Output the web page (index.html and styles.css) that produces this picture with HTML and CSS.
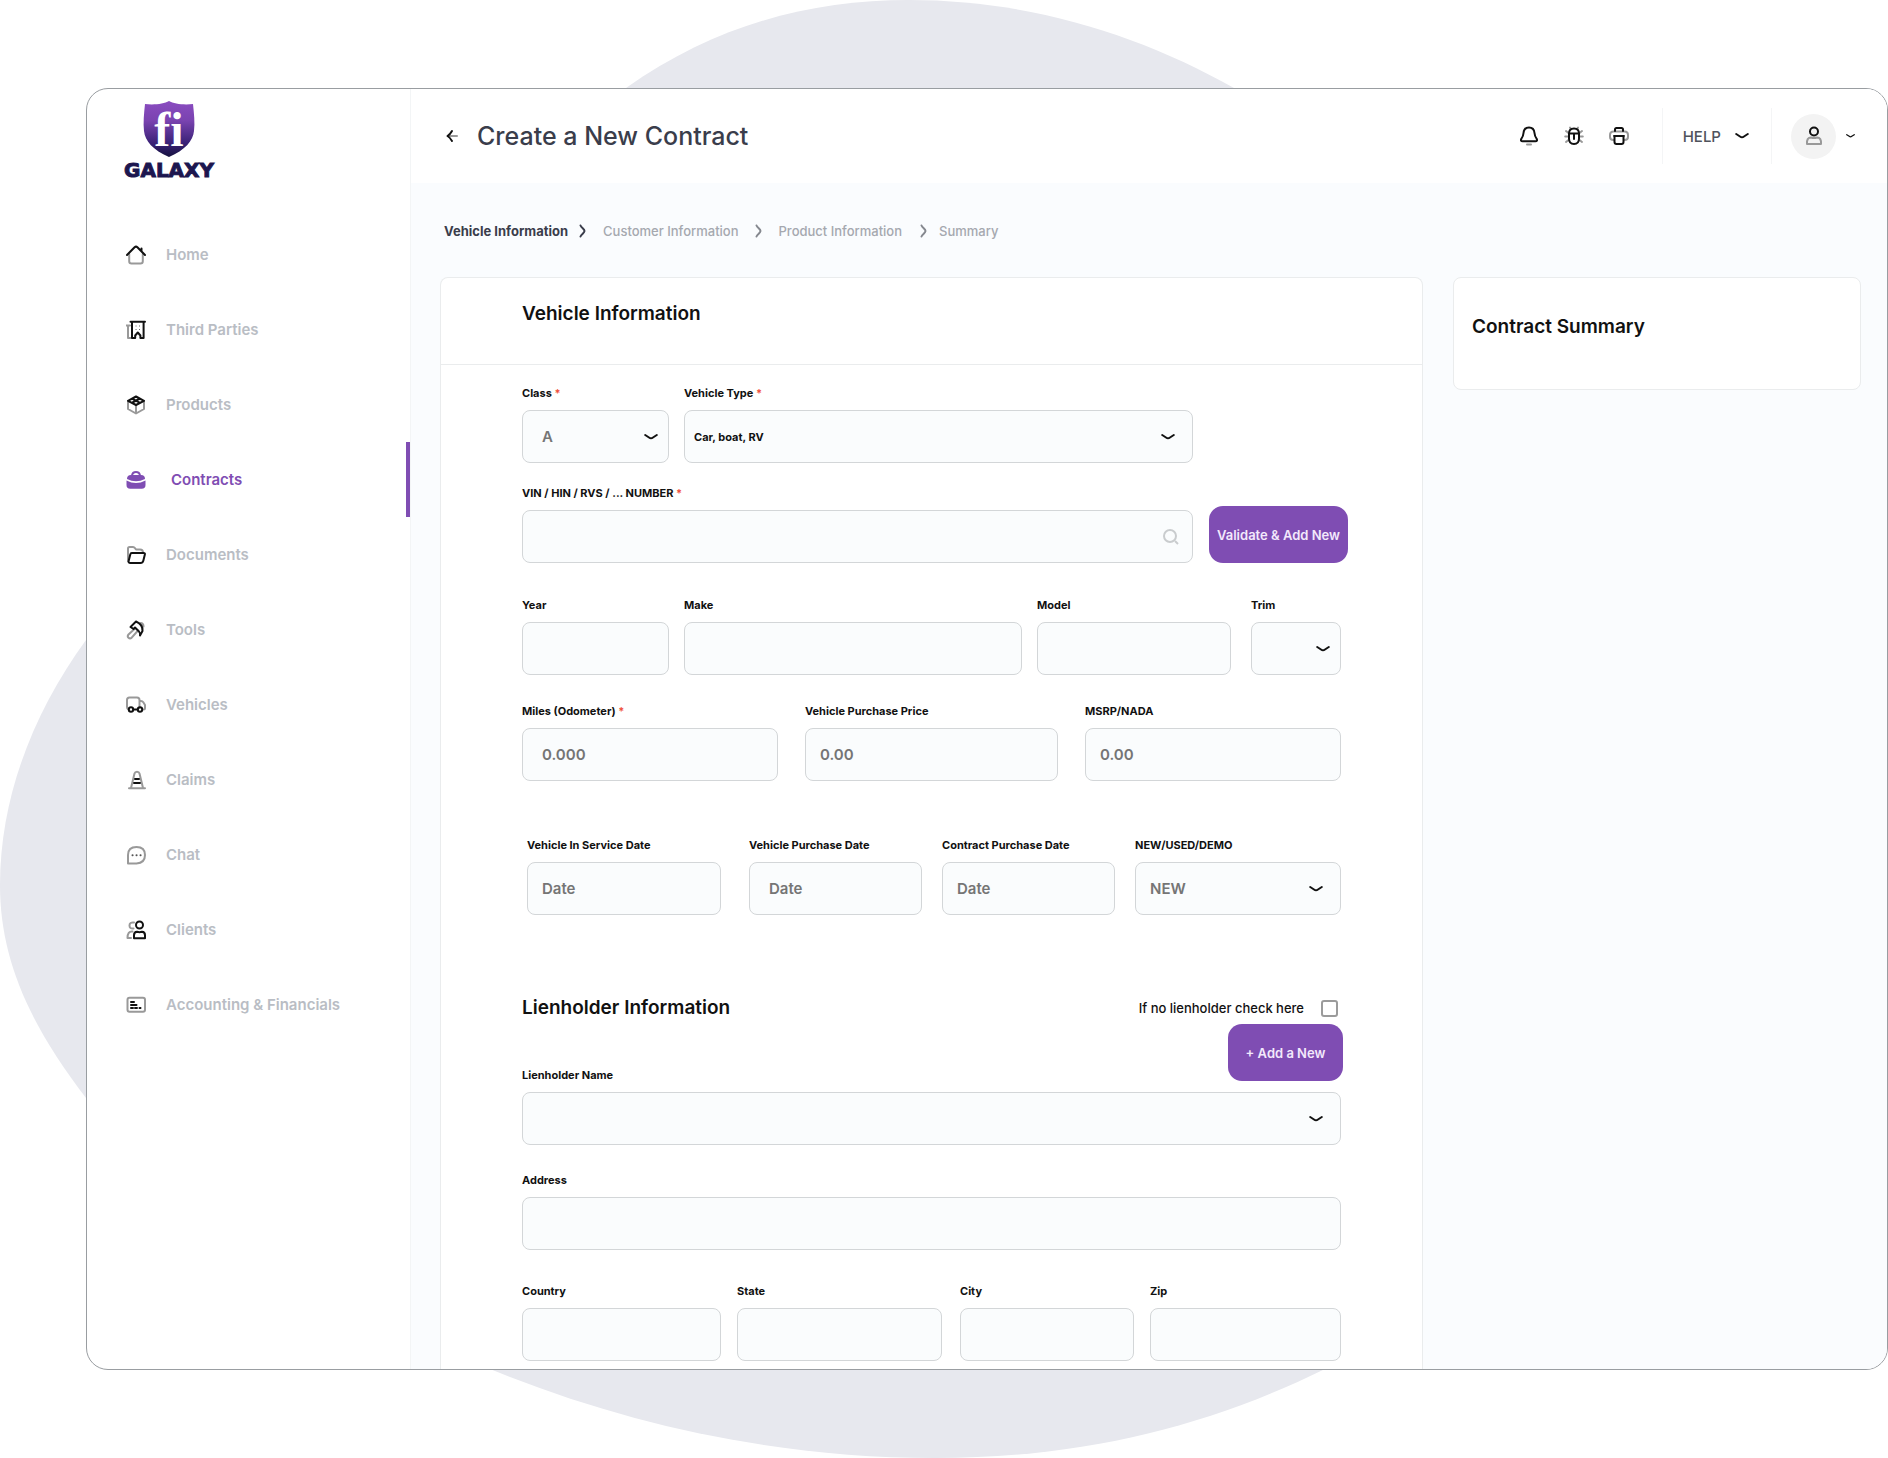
FILE: index.html
```html
<!DOCTYPE html>
<html lang="en">
<head>
<meta charset="utf-8">
<title>Create a New Contract</title>
<link rel="stylesheet" href="styles.css">
</head>
<body>
<svg width="0" height="0" class="defs" aria-hidden="true">
  <symbol id="chevron" viewBox="0 0 14 8"><path d="M1.200 2L5 4.500Q7 6 9 4.500L12.800 2" fill="none" stroke="currentColor" stroke-width="2" stroke-linecap="round"/></symbol>
  <symbol id="step" viewBox="0 0 8 14"><path d="M1.500 1.500C2.500 4 5.500 5 5.500 7S2.500 10 1.500 12.500" fill="none" stroke="currentColor" stroke-width="2" stroke-linecap="round"/></symbol>
</svg>
<div class="stage">
  <svg class="blob" viewBox="0 0 1888 1458" preserveAspectRatio="none" aria-hidden="true">
    <path d="M0 885C0 795 35 710 86 640L626 88C715 25 810 0 909 0C1030 0 1140 35 1234 88L1325 1369C1205 1428 1080 1458 935 1458C780 1458 630 1426 490 1369L86 1098C30 1025 0 960 0 885Z"/>
  </svg>
  <div class="window">
    <aside class="sidebar">
      <a class="logo" href="#">
        <svg width="52" height="56" viewBox="0 0 52 56" role="img" aria-label="fi">
          <defs><linearGradient id="shield" x1="0" y1="0" x2="0" y2="1"><stop offset="0" stop-color="#8a4cc0"/><stop offset=".35" stop-color="#7a43b0"/><stop offset=".75" stop-color="#3a2277"/><stop offset="1" stop-color="#15113f"/></linearGradient></defs>
          <path d="M26 0C21 3 11 4 2 3C1 12 0 22 1 30C2 40 10 49 26 56C42 49 50 40 51 30C52 22 51 12 50 3C41 4 31 3 26 0Z" fill="url(#shield)"/>
          <text x="26" y="45" text-anchor="middle" class="logo-mark">fi</text>
        </svg>
        <span class="logo-name">GALAXY</span>
      </a>
      <nav class="nav">
        <a class="nav-item" href="#"><svg class="icon" viewBox="0 0 20 20"><path class="soft" d="M3.200 9v7.200q0 2.300 2.300 2.300h9q2.300 0 2.300-2.300V9"/><path d="M1 10L8.600 2.200q1.400-1.200 2.800 0L19 10M15.500 6V3.500"/></svg><span>Home</span></a>
        <a class="nav-item" href="#"><svg class="icon" viewBox="0 0 20 20"><path class="soft" d="M.5 5.500H4M2 5.500V18h3"/><path d="M4.500 1.800h14.500M6 2v16h3.200v-2.500l2.600-3 2.600 3V18h3.200V2"/><path class="dots" d="M10 6h.1M13.500 6h.1M10 9.500h.1M13.500 9.500h.1"/></svg><span>Third Parties</span></a>
        <a class="nav-item" href="#"><svg class="icon" viewBox="0 0 20 20"><path class="soft" d="M2 6v8l8 4.500 8-4.500V6M10 10v8"/><path d="M10 1.500L18 5.800 10 10 2 5.800zM6 3.700l8 4.200M6.500 7.500L14 3.500"/></svg><span>Products</span></a>
        <a class="nav-item active" href="#"><svg class="icon" viewBox="0 0 20 20"><path d="M6 5.500q.5-3.500 4-3.500t4 3.500"/><path class="solid" d="M1 9q0-4 4-4h10q4 0 4 4-9 4.500-18 0zM.5 10.500q9.500 5 19 0V15q0 3.800-3.800 3.800H4.300Q.5 18.800.5 15z"/></svg><span>Contracts</span></a>
        <a class="nav-item" href="#"><svg class="icon" viewBox="0 0 20 20"><path class="soft" d="M2 16V3.500Q2 2 3.500 2H7q1.200 0 2 1.200L10 4.500h4q3 0 3 3"/><path d="M5.800 8H17.500q1.800 0 1.300 1.700l-1.500 6q-.6 2.300-2.800 2.300h-10Q2 18 2.700 15.700l1.500-6Q4.600 8 5.800 8z"/></svg><span>Documents</span></a>
        <a class="nav-item" href="#"><svg class="icon" viewBox="0 0 20 20"><path class="soft" d="M9 8.500l-6.500 6q-1.500 1.800 0 3.200t3.200 0L12 10.500M14.500 3q3 0 3 3.500"/><path d="M4.500 7L10 1.500q7 3 6.500 9.500l-2.500 4.500q.5-2-1-4L9 7.500 7.500 9z"/></svg><span>Tools</span></a>
        <a class="nav-item" href="#"><svg class="icon" viewBox="0 0 20 20"><path class="soft" d="M2.500 14.500Q1 14 1 12V5q0-2.500 2.500-2.500H11q2.500 0 2.500 2.500v8M13.500 6H15q1.500 0 2.300 1.200L19 10v3q0 1.500-1.500 1.500"/><circle cx="5" cy="14.500" r="2.200"/><circle cx="14" cy="14.500" r="2.200"/><path d="M7.500 14.500h4"/></svg><span>Vehicles</span></a>
        <a class="nav-item" href="#"><svg class="icon" viewBox="0 0 20 20"><path class="soft" d="M3 18.200h16M5 18L8.500 3.500q.5-1.800 2.500-1.800t2.500 1.800L17 18"/><path d="M9 9h4M8 13h6"/></svg><span>Claims</span></a>
        <a class="nav-item" href="#"><svg class="icon" viewBox="0 0 20 20"><path class="soft" d="M2 18.500V10q0-8 8.500-8t8.500 8-8.500 8.500z"/><path class="dots dots-lg" d="M6.500 10.200h.1M10.500 10.200h.1M14.500 10.200h.1"/></svg><span>Chat</span></a>
        <a class="nav-item" href="#"><svg class="icon" viewBox="0 0 20 20"><path class="soft" d="M8 2.500q-4.500-.5-4.500 3t4 3M6.500 11.500Q1.500 11 1.500 18H5"/><circle cx="13.500" cy="5" r="3.500"/><path d="M8 18.200v-3q0-3.200 3-3.400 2.500.8 5 0 3 .2 3 3.400v3z"/></svg><span>Clients</span></a>
        <a class="nav-item" href="#"><svg class="icon" viewBox="0 0 20 20"><rect class="soft" x="1.500" y="2.800" width="17.500" height="14" rx="2"/><path d="M5 7h3M5 10h5.500M5 13h2M9 13h2M13.500 13h1"/></svg><span>Accounting &amp; Financials</span></a>
      </nav>
    </aside>

    <div class="main">
      <header class="topbar">
        <button class="plain" type="button" aria-label="Back"><svg width="12" height="14" viewBox="0 0 12 14" class="icon"><path class="soft" d="M3 7h8"/><path d="M6 2Q4 5.500 1.500 7 4 8.500 6 12"/></svg></button>
        <h1>Create a New Contract</h1>
        <div class="tools">
          <button class="plain" type="button" aria-label="Notifications"><svg class="icon" viewBox="0 0 20 20"><path class="soft" d="M8 18.500h4"/><path d="M10 1.500q-5 0-5.500 5.500-.2 3-2 5.500-1.500 2.700 1.200 2.800h12.600q2.700-.1 1.200-2.800-1.800-2.500-2-5.500Q15 1.500 10 1.500z"/></svg></button>
          <button class="plain" type="button" aria-label="Report a bug"><svg class="icon" viewBox="0 0 20 20"><path class="soft" d="M4.500 7L2 5M4.500 10.500H1.200M4.500 14L2 16M15.500 7L18 5M15.500 10.500h3.300M15.500 14l2.500 2M7 3L6 1.500M13 3l1-1.500"/><path d="M10 2.500q-5 0-5 5v5q0 5.500 5 5.500t5-5.500v-5q0-5-5-5zM5.500 7.500h9M10 7.500V13"/></svg></button>
          <button class="plain" type="button" aria-label="Print"><svg class="icon" viewBox="0 0 20 20"><path class="soft" d="M4.500 14Q1 14 1 11V9q0-3.500 3.500-3.500h11Q19 5.500 19 9v2q0 3-3.500 3"/><path d="M6 5V3.500Q6 2 7.500 2h5Q14 2 14 3.500V5M5 10h10M5.500 10v6q0 2 2 2h5q2 0 2-2v-6"/></svg></button>
        </div>
        <button class="plain help" type="button">HELP <svg width="14" height="8"><use href="#chevron"/></svg></button>
        <button class="plain user" type="button" aria-label="Account"><span class="avatar"><svg class="icon" viewBox="0 0 20 20"><path class="soft" d="M3 18q-.5-6.500 4-6.500 3 1 6 0 4.500 0 4 6.500z"/><circle cx="10" cy="5.500" r="4"/></svg></span><svg width="9" height="6"><use href="#chevron"/></svg></button>
      </header>

      <ol class="steps">
        <li class="current">Vehicle Information</li>
        <li><svg class="first" width="8" height="14"><use href="#step"/></svg>Customer Information</li>
        <li><svg width="8" height="14"><use href="#step"/></svg>Product Information</li>
        <li><svg class="last" width="8" height="14"><use href="#step"/></svg>Summary</li>
      </ol>

      <div class="columns">
        <form class="card form">
          <div class="card-head"><h2>Vehicle Information</h2></div>
          <div class="form-body">
            <div class="row type-row">
              <div class="field"><label for="class">Class <i>*</i></label><div class="select tight"><select id="class" class="indent"><option>A</option></select><svg width="14" height="8"><use href="#chevron"/></svg></div></div>
              <div class="field"><label for="type">Vehicle Type <i>*</i></label><div class="select"><select id="type" class="strong"><option>Car, boat, RV</option></select><svg width="14" height="8"><use href="#chevron"/></svg></div></div>
            </div>
            <div class="row vin-row">
              <div class="field"><label for="vin">VIN / HIN / RVS / ... NUMBER <i>*</i></label><div class="select search"><input id="vin" type="text"><svg width="16" height="16" viewBox="0 0 16 16"><circle cx="7" cy="7" r="6" fill="none" stroke="currentColor" stroke-width="2"/><path d="M12 12l3 3" stroke="currentColor" stroke-width="2"/></svg></div></div>
              <button class="primary" type="button">Validate &amp; Add New</button>
            </div>
            <div class="row model-row">
              <div class="field"><label for="year">Year</label><input id="year" type="text"></div>
              <div class="field"><label for="make">Make</label><input id="make" type="text"></div>
              <div class="field"><label for="model">Model</label><input id="model" type="text"></div>
              <div class="field"><label for="trim">Trim</label><div class="select tight"><select id="trim"><option></option></select><svg width="14" height="8"><use href="#chevron"/></svg></div></div>
            </div>
            <div class="row price-row">
              <div class="field"><label for="miles">Miles (Odometer) <i>*</i></label><input id="miles" class="indent" type="text" placeholder="0.000"></div>
              <div class="field"><label for="price">Vehicle Purchase Price</label><input id="price" type="text" placeholder="0.00"></div>
              <div class="field"><label for="msrp">MSRP/NADA</label><input id="msrp" type="text" placeholder="0.00"></div>
            </div>
            <div class="row date-row">
              <div class="field"><label for="service">Vehicle In Service Date</label><input id="service" type="text" placeholder="Date"></div>
              <div class="field"><label for="vdate">Vehicle Purchase Date</label><input id="vdate" class="indent" type="text" placeholder="Date"></div>
              <div class="field"><label for="cdate">Contract Purchase Date</label><input id="cdate" type="text" placeholder="Date"></div>
              <div class="field"><label for="cond">NEW/USED/DEMO</label><div class="select"><select id="cond"><option>NEW</option></select><svg width="14" height="8"><use href="#chevron"/></svg></div></div>
            </div>

            <div class="lien-head">
              <div class="lien-title">
                <h2>Lienholder Information</h2>
                <label for="lien">Lienholder Name</label>
              </div>
              <div class="lien-actions">
                <label class="check">If no lienholder check here <input type="checkbox"></label>
                <button class="primary" type="button">+ Add a New</button>
              </div>
            </div>
            <div class="row lien-row"><div class="select"><select id="lien"><option></option></select><svg width="14" height="8"><use href="#chevron"/></svg></div></div>
            <div class="row address-row">
              <div class="field"><label for="address">Address</label><input id="address" type="text"></div>
            </div>
            <div class="row place-row">
              <div class="field"><label for="country">Country</label><input id="country" type="text"></div>
              <div class="field"><label for="state">State</label><input id="state" type="text"></div>
              <div class="field"><label for="city">City</label><input id="city" type="text"></div>
              <div class="field"><label for="zip">Zip</label><input id="zip" type="text"></div>
            </div>
          </div>
        </form>
        <section class="card summary"><h2>Contract Summary</h2></section>
      </div>
    </div>
  </div>
</div>
</body>
</html>
```
FILE: styles.css
```css
* { box-sizing: border-box; }

body {
  margin: 0;
  background: #fff;
  color: #111;
  font-family: Inter, "Liberation Sans", sans-serif;
}

h1, h2, ol { margin: 0; padding: 0; }

.defs { position: absolute; }

.stage {
  position: relative;
  padding: 88px 0 88px 86px;
}

.blob {
  position: absolute;
  inset: 0;
  width: 100%;
  height: 100%;
  fill: #e7e8ee;
}

.window {
  position: relative;
  display: flex;
  border: 1px solid #999da1;
  border-radius: 22px;
  background: #fff;
  overflow: hidden;
}

.icon {
  display: block;
  flex: none;
  width: 20px;
  height: 20px;
  fill: none;
  stroke: #111;
  stroke-width: 2;
  stroke-linecap: round;
  stroke-linejoin: round;
}
.icon .soft { stroke: #999; }
.icon .dots { stroke-width: 1; stroke: #555; }
.icon .dots-lg { stroke-width: 2; }

/* Sidebar */
.sidebar {
  flex: 0 0 324px;
  border-right: 1px solid #f3f5f6;
}

.logo {
  display: flex;
  flex-direction: column;
  width: 94px;
  margin: 12px 0 0 35px;
  align-items: center;
  gap: 3px;
  text-decoration: none;
}
.logo-mark {
  font: bold 48px "Liberation Serif", serif;
  fill: #fff;
}
.logo-name {
  font: bold 20px/20px "DejaVu Sans", sans-serif;
  color: #1c164f;
  -webkit-text-stroke: 1px #1c164f;
}

.nav { margin-top: 37px; }

.nav-item {
  display: flex;
  align-items: center;
  gap: 20px;
  height: 75px;
  padding-left: 39px;
  color: #b9bdc4;
  font-size: 15px;
  font-weight: 600;
  text-decoration: none;
}
.nav-item.active {
  gap: 25px;
  border-right: 4px solid #7f4db3;
  color: #7f4db3;
}
.active .icon { stroke: #7f4db3; }
.active .solid { fill: #7f4db3; stroke: none; }

/* Top bar */
.main {
  flex: 1;
  min-width: 0;
  background: #fafcfe;
}

.topbar {
  display: flex;
  align-items: center;
  height: 94px;
  padding: 0 32px 0 35px;
  background: #fff;
}
.topbar h1 {
  margin-left: 19px;
  color: #3a3d4b;
  font-size: 25px;
  line-height: 32px;
  font-weight: 500;
}

.plain {
  display: flex;
  align-items: center;
  padding: 0;
  border: 0;
  background: none;
  color: #111;
  font-family: inherit;
}
.plain > .icon[width] { width: 12px; height: 14px; }

.tools {
  display: flex;
  gap: 25px;
  margin: 0 33px 0 auto;
}
.help {
  gap: 14px;
  height: 56px;
  padding: 0 22px 0 20px;
  border: solid #f4f5f6;
  border-width: 0 1px;
  font-size: 15px;
  font-weight: 500;
  color: #50535c;
}
.help svg { color: #111; }
.user { gap: 10px; margin-left: 19px; }
.avatar {
  display: grid;
  place-items: center;
  width: 45px;
  height: 45px;
  border-radius: 50%;
  background: #f3f3f3;
}

/* Progress steps */
.steps {
  display: flex;
  align-items: center;
  padding: 38px 33px 36px;
  list-style: none;
  font-size: 13px;
  line-height: 20px;
  font-weight: 500;
  color: #a5a8af;
}
.steps li { display: flex; align-items: center; }
.steps .current { color: #3a3d4b; font-weight: 700; }
.steps svg { margin: 0 16px; color: #85888f; }
.steps svg.first { margin: 0 16px 0 11px; color: #3a3d4b; }
.steps svg.last { margin: 0 11px 0 18px; }

/* Cards */
.columns {
  display: grid;
  grid-template-columns: 983fr 408fr;
  gap: 30px;
  align-items: start;
  padding: 0 26px 0 29px;
}
.card {
  border: 1px solid #eaeced;
  border-radius: 8px;
  background: #fff;
}
.card h2, .lien-title h2 {
  font-size: 19px;
  line-height: 24px;
  font-weight: 600;
}
.form {
  border-bottom: 0;
  border-radius: 8px 8px 0 0;
}
.card-head {
  padding: 24px 81px 38px;
  border-bottom: 1px solid #eaeced;
}
.summary { padding: 37px 18px 50px; }

/* Form */
.form-body { padding: 20px 74px 8px 81px; }

.row {
  display: grid;
  margin-right: 7px;
}
.row > :nth-child(2) { grid-column: 3; }
.row > :nth-child(3) { grid-column: 5; }
.row > :nth-child(4) { grid-column: 7; }

.type-row {
  grid-template-columns: 147fr 15px 509fr 148fr;
}
.vin-row {
  grid-template-columns: 1fr 16px 139px;
  align-items: end;
  margin: 22px 0 0;
}
.model-row {
  grid-template-columns: 147fr 15px 338fr 15px 194fr 20px 90fr;
  margin-top: 34px;
}
.price-row {
  grid-template-columns: 256fr 27px 253fr 27px 256fr;
  margin-top: 28px;
}
.date-row {
  grid-template-columns: 194fr 28px 173fr 20px 173fr 20px 206fr;
  margin-top: 56px;
  padding-left: 5px;
}
.lien-row { margin-top: 9px; }
.address-row { margin-top: 27px; }
.place-row {
  grid-template-columns: 199fr 16px 205fr 18px 174fr 16px 191fr;
  margin-top: 33px;
}

.field { min-width: 0; }
.field label, .lien-title label {
  display: block;
  font-size: 11px;
  line-height: 16px;
  font-weight: 700;
}
.field label { margin-bottom: 9px; }
.field i { color: #f0503c; font-style: normal; }

.field input, .select select {
  display: block;
  width: 100%;
  height: 53px;
  padding: 0 14px;
  border: 1px solid #d3d6d8;
  border-radius: 8px;
  background: #fafcfd;
  color: #757575;
  font-family: inherit;
  font-size: 15px;
  font-weight: 600;
  appearance: none;
}
.field input::placeholder { color: #757575; opacity: 1; }
.field .indent { padding-left: 19px; }
.field .strong {
  padding-left: 9px;
  color: #111;
  font-size: 11px;
  font-weight: 700;
}

.select { display: grid; align-items: center; }
.select > * { grid-area: 1 / 1; }
.select > svg {
  justify-self: end;
  margin-right: 18px;
  pointer-events: none;
}
.select.tight > svg { margin-right: 11px; }
.select.search > svg { margin-right: 14px; color: #c9ccce; }

.primary {
  height: 57px;
  padding: 0;
  border: 0;
  border-radius: 14px;
  background: #7f4db3;
  color: #f3e9fc;
  font-family: inherit;
  font-size: 13px;
  font-weight: 600;
}

.lien-head {
  display: flex;
  justify-content: space-between;
  align-items: flex-start;
  margin: 81px 5px 0 0;
}
.lien-title { display: grid; gap: 47px; }
.lien-actions {
  display: flex;
  flex-direction: column;
  align-items: flex-end;
  gap: 4px;
}
.lien-actions .primary { width: 115px; }

.check {
  display: flex;
  align-items: center;
  gap: 17px;
  padding-right: 5px;
  font-size: 13px;
  line-height: 24px;
  font-weight: 500;
}
.check input {
  width: 17px;
  height: 17px;
  margin: 0;
  border: 2px solid #9b9b9b;
  border-radius: 3px;
  background: #fff;
  appearance: none;
}
```
